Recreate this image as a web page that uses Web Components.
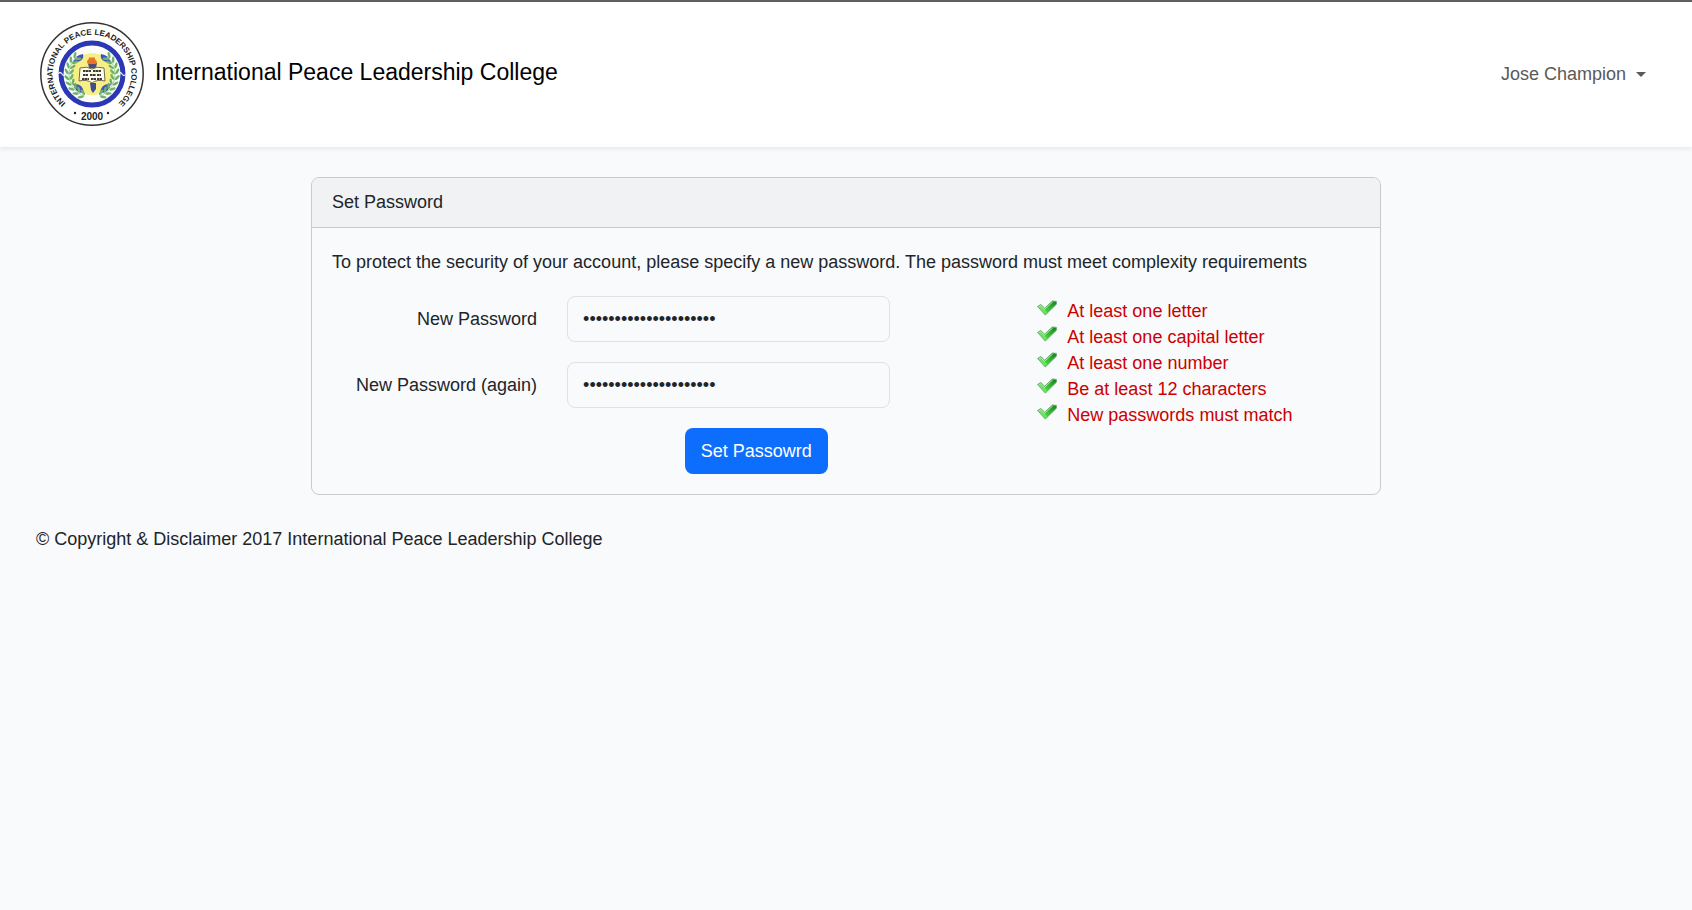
<!DOCTYPE html>
<html lang="en">
<head>
<meta charset="utf-8">
<meta name="viewport" content="width=device-width, initial-scale=1">
<title>Set Password - International Peace Leadership College</title>
<style>
  body {
    margin: 0;
    background: #f8fafc;
    color: #212529;
    font: 18px/28px "Liberation Sans", Arial, sans-serif;
  }
</style>
</head>
<body>
<set-password-page></set-password-page>

<template id="college-seal">
  <style>
    :host { display: block; width: 104px; height: 104px; }
    svg { display: block; width: 100%; height: 100%; }
    text { font-family: "Liberation Sans", Arial, sans-serif; font-weight: 700; fill: #222; }
  </style>
  <svg viewBox="-104 -104 208 208" role="img" aria-label="College seal">
    <defs>
      <path id="ring" d="M-53 58A78.600 78.600 0 1 1 53 58"/>
      <g id="pair">
        <ellipse cx="-25.500" cy="0" rx="3.200" ry="1.300" transform="rotate(55 -25.500 0)"/>
        <ellipse cx="-20.500" cy="0" rx="3.200" ry="1.300" transform="rotate(-55 -20.500 0)" />
      </g>
      <g id="branch" fill="#6db469">
        <path d="M-8 22A23 23 0 0 1-15-17" fill="none" stroke="#a5cf9c" stroke-width="1"/>
        <use href="#pair" transform="rotate(48)"/>
        <use href="#pair" transform="rotate(34)"/>
        <use href="#pair" transform="rotate(20)"/>
        <use href="#pair" transform="rotate(6)"/>
        <use href="#pair" transform="rotate(-8)"/>
        <use href="#pair" transform="rotate(-22)"/>
        <use href="#pair" transform="rotate(-36)"/>
        <use href="#pair" transform="rotate(-50)"/>
        <use href="#pair" transform="rotate(-64)"/>
      </g>
    </defs>
    <g transform="scale(2)">
      <circle r="51.200" fill="#fff" stroke="#333" stroke-width="1.500"/>
      <circle r="31" fill="#fcfdf6" stroke="#2b37b4" stroke-width="5"/>
      <circle r="21" fill="#f8ee86"/>
      <path d="M-20-11Q-17-19-9-20-7-12-20-11ZM20-11Q17-19 9-20 7-12 20-11ZM-19 10Q-9 9-8 19-16 20-19 10ZM19 10Q9 9 8 19 16 20 19 10Z" fill="#4453bb"/>
      <use href="#branch"/>
      <use href="#branch" transform="scale(-1 1)"/>
      <path d="M-34 0q2-3 4 0t4 0M26 0q2-3 4 0t4 0" fill="none" stroke="#e8ebf8" stroke-width="1.300"/>
      <path d="M-2 9H4V15L1 19-1 16Z" fill="#3f4c8e"/>
      <path d="M-3-6-4-11H5L4-6Z" fill="#4e4b78"/>
      <path d="M-4-10C-7-14-2-14-3-17 0-15 1-18 3-16 2-14 7-13 4-10Z" fill="#e87526"/>
      <path d="M-12-6Q-5-8 0-5 5-8 12-6L13 7Q5 5 0 9-5 5-13 7Z" fill="#fffde9" stroke="#706b4b" stroke-width="1"/>
      <path d="M-9-3H-1M1-3H9M-9 1H-4M-2 1H4M5 1H9M-10 5H-3M-1 5H4M5 5H10" stroke="#3e3c3c" stroke-width="1.800" stroke-dasharray="2.500 .400"/>
      <circle cx="-17" cy="39" r="1.200" fill="#222"/>
      <circle cx="16" cy="39" r="1.200" fill="#222"/>
    </g>
    <text font-size="16" text-anchor="middle"><textPath href="#ring" startOffset="50%">INTERNATIONAL PEACE LEADERSHIP COLLEGE</textPath></text>
    <text y="91" font-size="20" text-anchor="middle">2000</text>
  </svg>
</template>

<template id="site-header">
  <style>
    :host {
      display: flex; justify-content: space-between; align-items: center;
      box-sizing: border-box; padding: 20px 46px 21px 40px;
      border-top: 2px solid #605f61; background: #fff;
      box-shadow: 0 2px 5px rgba(0, 0, 0, .08); position: relative;
    }
    .brand { display: flex; align-items: center; gap: 11px; color: #000; text-decoration: none; font-size: 23px; line-height: 36px; }
    .brand span { padding-bottom: 4px; }
    button {
      display: flex; align-items: center; gap: 10px; padding: 0;
      border: 0; background: none; color: #595959; font: inherit;
    }
    .caret { border: 5px solid transparent; border-top-color: currentColor; border-bottom: 0; }
  </style>
  <a class="brand" href="#"><college-seal></college-seal><span>International Peace Leadership College</span></a>
  <button type="button" aria-haspopup="true">Jose Champion<span class="caret"></span></button>
</template>

<template id="content-card">
  <style>
    :host { display: block; border: 1px solid #c8cacc; border-radius: 8px; overflow: hidden; }
    header { padding: 10px 20px 11px; border-bottom: 1px solid #c8cacc; background: #f1f2f4; }
    .body { padding: 20px; }
  </style>
  <header><slot name="title"></slot></header>
  <div class="body"><slot></slot></div>
</template>

<template id="password-field">
  <style>
    :host { display: grid; grid-template-columns: 4fr 6fr 2fr; align-items: center; }
    label { padding-right: 15px; text-align: right; }
    input {
      box-sizing: border-box; min-width: 0; height: 46px; margin: 0 15px; padding: 8px 15px;
      border: 1px solid #dee2e6; border-radius: 8px; background: #f8fafc;
      color: #212529; font: inherit; outline: 0;
    }
  </style>
  <label for="password"><slot></slot></label>
  <input id="password" type="password" value="Abcdefghijklmnopqr123" autocomplete="new-password">
</template>

<template id="rule-item">
  <style>
    :host { display: flex; align-items: center; gap: 10px; color: #c00; line-height: 26px; }
    svg { flex: none; width: 20px; height: 16px; margin-bottom: 6px; }
  </style>
  <svg viewBox="0 0 20 16" aria-hidden="true">
    <defs>
      <linearGradient id="left" x1="0" y1="0" x2=".8" y2="1"><stop stop-color="#8bcf86"/><stop offset="1" stop-color="#56f34c"/></linearGradient>
      <linearGradient id="right" x1="0" y1="1" x2="1" y2="0"><stop stop-color="#62f258"/><stop offset=".5" stop-color="#3ac13a"/><stop offset="1" stop-color="#157b1b"/></linearGradient>
    </defs>
    <path d="M.6 6.5 3.8 4.6 7.6 8.2 15.4 1 19.4 1.4V4.2L8.3 15Z" fill="url(#right)" stroke="#6da96d" stroke-width="1" stroke-linejoin="round"/>
    <path d="M1 6.8 3.8 5.2 7.7 9.2 10 12.8 8.3 14.3Z" fill="url(#left)"/>
    <path d="M2 6.7 3.8 5.7 7.6 9.3 15.7 1.9" fill="none" stroke="#b4e8ac" stroke-width="1"/>
  </svg>
  <span><slot></slot></span>
</template>

<template id="password-form">
  <style>
    :host { display: block; }
    p { margin: 0 0 20px; }
    form { display: grid; grid-template-columns: 2fr 1fr; margin: 0 -15px; }
    .fields { display: grid; gap: 20px; }
    .actions { padding-left: calc(50% + 15px); }
    button {
      padding: 9px 16px; border: 0; border-radius: 8px;
      background: #0d6efd; color: #fff; font: inherit;
    }
    ul { list-style: none; margin: 0; padding: 2px 0 0 15px; }
  </style>
  <p>To protect the security of your account, please specify a new password. The password must meet complexity requirements</p>
  <form>
    <div class="fields">
      <password-field>New Password</password-field>
      <password-field>New Password (again)</password-field>
      <div class="actions"><button type="button">Set Passowrd</button></div>
    </div>
    <ul>
      <li><rule-item>At least one letter</rule-item></li>
      <li><rule-item>At least one capital letter</rule-item></li>
      <li><rule-item>At least one number</rule-item></li>
      <li><rule-item>Be at least 12 characters</rule-item></li>
      <li><rule-item>New passwords must match</rule-item></li>
    </ul>
  </form>
</template>

<template id="set-password-page">
  <style>
    :host { display: block; }
    main { box-sizing: border-box; max-width: 1100px; margin: 0 auto; padding: 30px 15px; }
    footer { padding: 0 36px; }
  </style>
  <site-header></site-header>
  <main>
    <content-card><span slot="title">Set Password</span><password-form></password-form></content-card>
  </main>
  <footer>© Copyright &amp; Disclaimer 2017 International Peace Leadership College</footer>
</template>

<script>
  class TemplateElement extends HTMLElement {
    constructor() {
      super();
      const template = document.getElementById(this.localName);
      this.attachShadow({ mode: "open" }).append(template.content.cloneNode(true));
    }
  }
  class CollegeSeal extends TemplateElement {}
  class SiteHeader extends TemplateElement {}
  class ContentCard extends TemplateElement {}
  class PasswordField extends TemplateElement {}
  class RuleItem extends TemplateElement {}
  class PasswordForm extends TemplateElement {}
  class SetPasswordPage extends TemplateElement {}

  customElements.define("college-seal", CollegeSeal);
  customElements.define("site-header", SiteHeader);
  customElements.define("content-card", ContentCard);
  customElements.define("password-field", PasswordField);
  customElements.define("rule-item", RuleItem);
  customElements.define("password-form", PasswordForm);
  customElements.define("set-password-page", SetPasswordPage);
</script>
</body>
</html>
